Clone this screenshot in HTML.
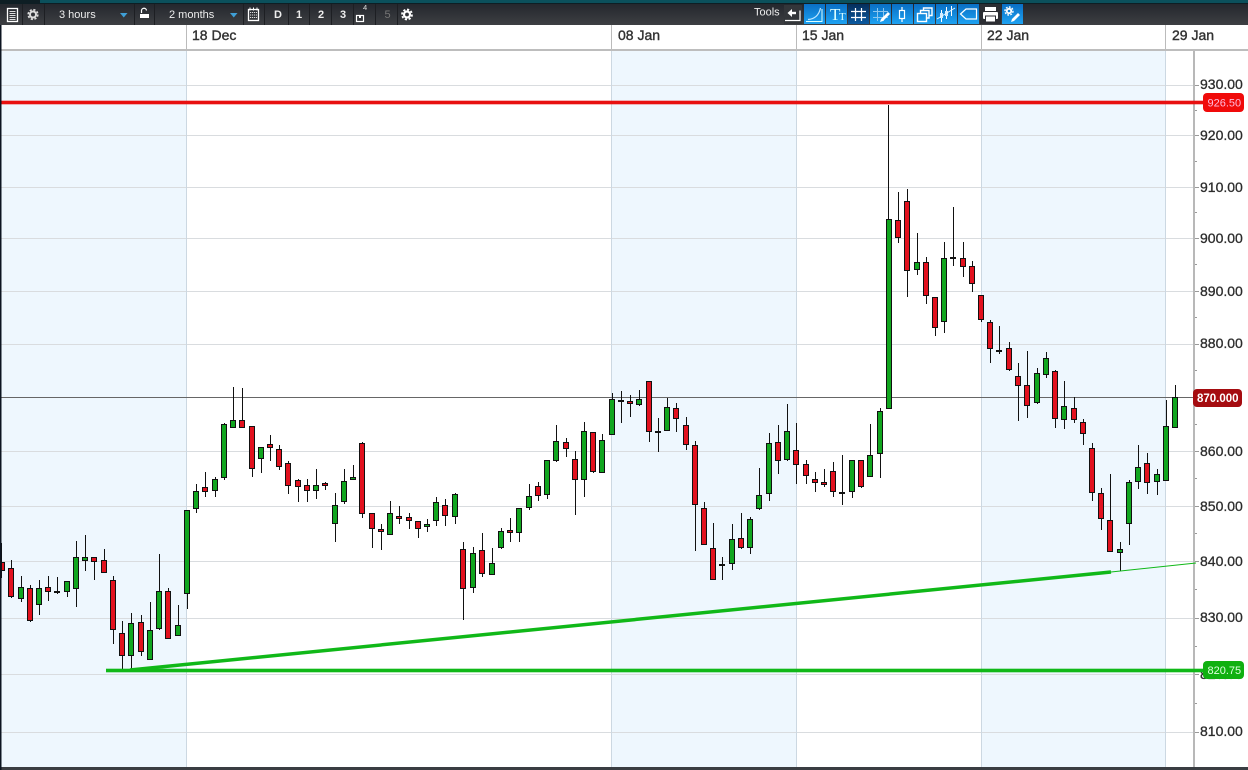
<!DOCTYPE html>
<html><head><meta charset="utf-8"><style>
html,body{margin:0;padding:0;background:#fff;width:1248px;height:770px;overflow:hidden}
svg{display:block;font-family:"Liberation Sans",sans-serif}
.d{font-size:14px;fill:#333;stroke:#333;stroke-width:.4}
.p{font-size:14px;fill:#2c2c2c;stroke:#2c2c2c;stroke-width:.3}
.t{font-size:11px;fill:#eee}
.n{font-size:11px;fill:#eee;font-weight:bold}
.i{fill:none;stroke:#fff;stroke-width:1.3}
</style></head><body>
<svg width="1248" height="770" viewBox="0 0 1248 770" xmlns="http://www.w3.org/2000/svg">
<defs>
<linearGradient id="tb" x1="0" y1="0" x2="0" y2="1"><stop offset="0" stop-color="#24272d"/><stop offset="1" stop-color="#3d3f42"/></linearGradient>
<linearGradient id="bl" x1="0" y1="0" x2="0" y2="1"><stop offset="0" stop-color="#0a6fc4"/><stop offset="1" stop-color="#1da2f2"/></linearGradient>
<linearGradient id="dk" x1="0" y1="0" x2="0" y2="1"><stop offset="0" stop-color="#062f5c"/><stop offset="1" stop-color="#0b5aa0"/></linearGradient>
</defs>
<rect width="1248" height="770" fill="#fff"/>
<!-- bands -->
<g fill="#eef7fe"><rect x="0" y="51" width="186" height="716"/><rect x="611" y="51" width="185" height="716"/><rect x="981" y="51" width="184" height="716"/></g>
<!-- grid -->
<path d="M0 85.5H1194M0 135.5H1194M0 187.5H1194M0 238.5H1194M0 291.5H1194M0 344.5H1194M0 451.5H1194M0 506.5H1194M0 561.5H1194M0 618.5H1194M0 674.5H1194M0 732.5H1194" stroke="#d9dcdf" stroke-width="1"/>
<path d="M186.5 51V767M611.5 51V767M796.5 51V767M981.5 51V767M1165.5 51V767" stroke="#ccd8e2" stroke-width="1"/>
<!-- date header -->
<path d="M186.5 25V49M611.5 25V49M796.5 25V49M981.5 25V49M1165.5 25V49" stroke="#bbb" stroke-width="1"/>
<rect x="0" y="49" width="1248" height="2" fill="#bdbdbd"/>
<text class="d" x="192" y="40">18 Dec</text>
<text class="d" x="618" y="40">08 Jan</text>
<text class="d" x="802" y="40">15 Jan</text>
<text class="d" x="987" y="40">22 Jan</text>
<text class="d" x="1172" y="40">29 Jan</text>
<!-- last price line -->
<rect x="0" y="397" width="1194" height="1" fill="#666"/>
<!-- axis -->
<rect x="1193" y="51" width="2" height="716" fill="#b8b8b8"/>
<path d="M1195 85.5h4M1195 135.5h4M1195 187.5h4M1195 238.5h4M1195 291.5h4M1195 344.5h4M1195 451.5h4M1195 506.5h4M1195 561.5h4M1195 618.5h4M1195 674.5h4M1195 732.5h4M1195 110.5h2M1195 161.5h2M1195 212.5h2M1195 264.5h2M1195 317.5h2M1195 370.5h2M1195 424.5h2M1195 478.5h2M1195 533.5h2M1195 589.5h2M1195 646.5h2M1195 703.5h2" stroke="#999" stroke-width="1"/>
<text class="p" x="1200" y="89">930.00</text>
<text class="p" x="1200" y="140">920.00</text>
<text class="p" x="1200" y="192">910.00</text>
<text class="p" x="1200" y="243">900.00</text>
<text class="p" x="1200" y="296">890.00</text>
<text class="p" x="1200" y="348">880.00</text>
<text class="p" x="1200" y="456">860.00</text>
<text class="p" x="1200" y="511">850.00</text>
<text class="p" x="1200" y="566">840.00</text>
<text class="p" x="1200" y="622">830.00</text>
<text class="p" x="1200" y="679">820.00</text>
<text class="p" x="1200" y="736">810.00</text>
<!-- wicks -->
<path stroke="#111" stroke-width="1" fill="none" d="M1.5 543V578M11.5 560V598M21.5 576V602M30.5 585V622M39.5 580V615M48.5 576V601M57.5 577V594M67.5 581V597M76.5 541V607M85.5 535V571M94.5 557V580M104.5 549V573M113.5 576V644M122.5 621V669M131.5 613V669M141.5 615V656M150.5 602V660M159.5 554V630M168.5 588V639M178.5 605V636M187.5 510V609M196.5 484V513M205.5 472V497M215.5 477V497M224.5 423V480M233.5 387V428M242.5 388V428M252.5 426V477M261.5 447V473M270.5 435V461M279.5 445V470M288.5 461V494M298.5 479V502M307.5 479V502M316.5 469V499M325.5 482V490M335.5 493V542M344.5 469V504M353.5 465V480M362.5 442V518M372.5 513V548M381.5 524V550M390.5 501V535M399.5 506V524M409.5 513V529M418.5 521V538M427.5 519V532M436.5 497V526M445.5 499V526M455.5 493V524M463.5 542V620M473.5 547V593M482.5 533V577M492.5 548V575M501.5 528V549M510.5 518V542M519.5 508V542M529.5 484V510M538.5 482V501M547.5 460V499M556.5 425V462M566.5 438V457M575.5 451V515M584.5 422V497M593.5 432V473M602.5 434V473M612.5 393V435M621.5 391V423M630.5 395V417M639.5 390V406M649.5 381V442M658.5 418V452M667.5 398V431M676.5 403V432M686.5 417V450M695.5 441V551M704.5 502V545M713.5 523V580M722.5 557V580M732.5 524V570M741.5 513V549M750.5 517V554M759.5 468V510M769.5 433V501M778.5 425V474M787.5 404V461M796.5 423V484M806.5 460V484M815.5 472V492M824.5 469V487M833.5 462V497M842.5 455V505M852.5 460V498M861.5 460V488M870.5 424V477M880.5 408V478M888.5 105V409M898.5 192V243M907.5 189V297M917.5 233V275M926.5 257V304M935.5 297V336M944.5 242V333M953.5 207V266M963.5 242V277M972.5 261V292M981.5 295V322M990.5 320V363M999.5 326V354M1009.5 342V371M1018.5 363V421M1027.5 351V418M1037.5 368V404M1046.5 352V378M1055.5 370V428M1064.5 381V429M1074.5 397V423M1083.5 419V445M1092.5 443V501M1101.5 488V530M1110.5 474V552M1120.5 542V571M1129.5 480V545M1138.5 445V489M1147.5 453V494M1157.5 469V495M1166.5 400V481M1175.5 385V428"/>
<!-- red bodies -->
<path fill="#e2111e" stroke="#111" stroke-width="1" d="M1.5 562.5h3V570.5h-3zM8.5 568.5h5V596.5h-5zM27.5 588.5h5V620.5h-5zM45.5 587.5h5V591.5h-5zM91.5 557.5h5V561.5h-5zM101.5 560.5h5V572.5h-5zM110.5 580.5h5V629.5h-5zM119.5 633.5h5V655.5h-5zM138.5 622.5h5V651.5h-5zM165.5 591.5h5V638.5h-5zM202.5 487.5h5V491.5h-5zM239.5 420.5h5V427.5h-5zM249.5 426.5h5V468.5h-5zM267.5 444.5h5V447.5h-5zM276.5 449.5h5V466.5h-5zM285.5 463.5h5V485.5h-5zM295.5 480.5h5V486.5h-5zM304.5 485.5h5V490.5h-5zM322.5 483.5h5V485.5h-5zM359.5 443.5h5V513.5h-5zM369.5 513.5h5V528.5h-5zM378.5 529.5h5V531.5h-5zM396.5 516.5h5V518.5h-5zM406.5 517.5h5V520.5h-5zM415.5 521.5h5V528.5h-5zM442.5 505.5h5V515.5h-5zM460.5 549.5h5V588.5h-5zM479.5 550.5h5V573.5h-5zM507.5 530.5h5V532.5h-5zM535.5 486.5h5V495.5h-5zM563.5 442.5h5V448.5h-5zM572.5 459.5h5V479.5h-5zM590.5 432.5h5V471.5h-5zM618.5 400.5h5V401.5h-5zM627.5 401.5h5V403.5h-5zM646.5 381.5h5V431.5h-5zM673.5 408.5h5V418.5h-5zM683.5 425.5h5V444.5h-5zM692.5 445.5h5V504.5h-5zM701.5 508.5h5V544.5h-5zM710.5 548.5h5V579.5h-5zM738.5 538.5h5V547.5h-5zM775.5 442.5h5V460.5h-5zM793.5 450.5h5V464.5h-5zM803.5 464.5h5V475.5h-5zM812.5 479.5h5V482.5h-5zM821.5 482.5h5V484.5h-5zM830.5 471.5h5V491.5h-5zM858.5 460.5h5V486.5h-5zM895.5 220.5h5V237.5h-5zM904.5 201.5h5V270.5h-5zM923.5 262.5h5V295.5h-5zM932.5 297.5h5V327.5h-5zM950.5 257.5h5V258.5h-5zM960.5 258.5h5V266.5h-5zM969.5 266.5h5V283.5h-5zM978.5 295.5h5V319.5h-5zM987.5 322.5h5V348.5h-5zM1006.5 348.5h5V369.5h-5zM1015.5 376.5h5V385.5h-5zM1024.5 385.5h5V405.5h-5zM1052.5 371.5h5V418.5h-5zM1071.5 408.5h5V419.5h-5zM1080.5 422.5h5V433.5h-5zM1089.5 448.5h5V492.5h-5zM1098.5 493.5h5V518.5h-5zM1107.5 520.5h5V551.5h-5zM1144.5 463.5h5V482.5h-5z"/>
<!-- green bodies -->
<path fill="#11a61f" stroke="#111" stroke-width="1" d="M18.5 587.5h5V598.5h-5zM36.5 588.5h5V604.5h-5zM54.5 591.5h5V592.5h-5zM64.5 581.5h5V591.5h-5zM73.5 557.5h5V588.5h-5zM82.5 557.5h5V560.5h-5zM128.5 623.5h5V655.5h-5zM147.5 630.5h5V659.5h-5zM156.5 591.5h5V628.5h-5zM175.5 625.5h5V635.5h-5zM184.5 510.5h5V593.5h-5zM193.5 491.5h5V508.5h-5zM212.5 479.5h5V490.5h-5zM221.5 424.5h5V477.5h-5zM230.5 420.5h5V427.5h-5zM258.5 447.5h5V458.5h-5zM313.5 485.5h5V490.5h-5zM332.5 505.5h5V523.5h-5zM341.5 481.5h5V501.5h-5zM350.5 477.5h5V479.5h-5zM387.5 513.5h5V534.5h-5zM424.5 524.5h5V526.5h-5zM433.5 502.5h5V520.5h-5zM452.5 494.5h5V516.5h-5zM470.5 553.5h5V587.5h-5zM489.5 563.5h5V574.5h-5zM498.5 531.5h5V547.5h-5zM516.5 508.5h5V532.5h-5zM526.5 496.5h5V507.5h-5zM544.5 460.5h5V494.5h-5zM553.5 441.5h5V460.5h-5zM581.5 431.5h5V479.5h-5zM599.5 440.5h5V472.5h-5zM609.5 399.5h5V434.5h-5zM636.5 399.5h5V404.5h-5zM655.5 431.5h5V432.5h-5zM664.5 407.5h5V430.5h-5zM719.5 564.5h5V565.5h-5zM729.5 539.5h5V563.5h-5zM747.5 519.5h5V547.5h-5zM756.5 495.5h5V508.5h-5zM766.5 443.5h5V493.5h-5zM784.5 431.5h5V459.5h-5zM839.5 492.5h5V493.5h-5zM849.5 460.5h5V491.5h-5zM867.5 455.5h5V476.5h-5zM877.5 411.5h5V453.5h-5zM886.5 219.5h5V408.5h-5zM914.5 262.5h5V269.5h-5zM941.5 258.5h5V321.5h-5zM996.5 350.5h5V351.5h-5zM1034.5 373.5h5V402.5h-5zM1043.5 358.5h5V374.5h-5zM1061.5 406.5h5V419.5h-5zM1117.5 549.5h5V552.5h-5zM1126.5 482.5h5V523.5h-5zM1135.5 467.5h5V481.5h-5zM1154.5 474.5h5V481.5h-5zM1163.5 426.5h5V480.5h-5zM1172.5 397.5h5V427.5h-5z"/>
<!-- trend lines -->
<rect x="0" y="100.700" width="1205" height="3.600" fill="#e81010"/>
<rect x="106" y="668.700" width="1099" height="3.600" fill="#10b818"/>
<path d="M130 670L1111 572" stroke="#10b818" stroke-width="3.500" fill="none"/>
<path d="M1111 572L1196 563" stroke="#10b818" stroke-width="1" fill="none"/>
<!-- price tags -->
<rect x="1203" y="93" width="41" height="19" rx="4" fill="#f00a0a"/>
<text x="1207.500" y="106.500" font-size="11" fill="#fbd">926.50</text>
<rect x="1203" y="661" width="41" height="18" rx="4" fill="#10b010"/>
<text x="1207.500" y="674" font-size="11" fill="#dfd">820.75</text>
<rect x="1193" y="389" width="49" height="18" rx="4" fill="#a50c10"/>
<text x="1197" y="402" font-size="11.500" font-weight="bold" fill="#fff">870.000</text>
<!-- bottom & left -->
<rect x="0" y="767" width="1248" height="3" fill="#3a3d42"/>
<rect x="0" y="25" width="1.500" height="745" fill="#0c1420"/>
<!-- toolbar -->
<rect x="0" y="0" width="1248" height="4" fill="#0e1e24"/>
<rect x="40" y="0" width="1208" height="3" fill="#0b505c"/>
<rect x="0" y="4" width="1248" height="21" fill="url(#tb)"/>
<path d="M22.500 4V25M44.500 4V25M134.500 4V25M154.500 4V25M243.500 4V25M264.500 4V25M288.500 4V25M309.500 4V25M331.500 4V25M353.500 4V25M375.500 4V25M397.500 4V25" stroke="#1d1f23" stroke-width="1"/>
<!-- list icon -->
<rect x="7.500" y="8.500" width="10" height="13" class="i"/>
<path d="M9.500 11.500h6M9.500 13.500h6M9.500 15.500h6M9.500 17.500h6M9.500 19.500h6" stroke="#ddd" stroke-width="1"/>
<!-- gears -->
<circle cx="33" cy="14.500" r="3" fill="none" stroke="#ddd" stroke-width="2"/>
<circle cx="33" cy="14.500" r="4.800" fill="none" stroke="#ddd" stroke-width="1.600" stroke-dasharray="2.200 1.600"/>
<circle cx="407" cy="14.500" r="3" fill="none" stroke="#fff" stroke-width="2.200"/>
<circle cx="407" cy="14.500" r="5" fill="none" stroke="#fff" stroke-width="1.800" stroke-dasharray="2.200 1.700"/>
<text class="t" x="59" y="18">3 hours</text>
<path d="M120 13h7.500l-3.750 4.500z" fill="#3f9fd6"/>
<path d="M141.500 13v-2a2.500 2.500 0 0 1 5 -.5" fill="none" stroke="#fff" stroke-width="1.200"/>
<rect x="140" y="14" width="9" height="4" fill="#fff"/>
<text class="t" x="169" y="18">2 months</text>
<path d="M230 13h7.500l-3.750 4.500z" fill="#3f9fd6"/>
<!-- calendar -->
<rect x="248.500" y="9.500" width="10" height="11" class="i" stroke-width="1"/>
<path d="M250 7.500v3M253.500 7.500v3M257 7.500v3" stroke="#fff" stroke-width="1"/>
<path d="M250 12.500h7M250 15h7M250 17.500h7" stroke="#ddd" stroke-width="1" stroke-dasharray="1.200 .8"/>
<text class="n" x="274" y="18">D</text>
<text class="n" x="296" y="18">1</text>
<text class="n" x="318" y="18">2</text>
<text class="n" x="340" y="18">3</text>
<rect x="356.500" y="15.500" width="7" height="6" fill="none" stroke="#fff" stroke-width="1.200"/>
<rect x="359" y="15" width="2" height="3" fill="#fff"/>
<text x="363" y="10" font-size="7.500" fill="#ddd">4</text>
<text x="384.500" y="18" font-size="11" fill="#777">5</text>
<!-- tools -->
<text x="754" y="15.500" font-size="11" fill="#eee">Tools</text>
<rect x="784" y="5" width="18" height="19" fill="#33363a"/>
<path d="M785 20.500H800V10.500" fill="none" stroke="#fff" stroke-width="1.200"/>
<path d="M796 13H790" stroke="#fff" stroke-width="2.400"/>
<path d="M792 9l-4.500 4 4.500 4z" fill="#fff"/>
<g fill="url(#bl)">
<rect x="804" y="4" width="21" height="20"/><rect x="826" y="4" width="21" height="20"/>
<rect x="870" y="4" width="21" height="20"/><rect x="892" y="4" width="21" height="20"/>
<rect x="914" y="4" width="21" height="20"/><rect x="936" y="4" width="21" height="20"/>
<rect x="958" y="4" width="21" height="20"/><rect x="1002" y="4" width="21" height="20"/>
</g>
<rect x="848" y="4" width="21" height="20" fill="url(#dk)"/>
<rect x="980" y="4" width="21" height="20" fill="#2c2e33"/>
<path d="M806 21.500H822V9" fill="none" stroke="#dff" stroke-width="1"/>
<path d="M808 19.500C815 19 819 15 820.500 8" fill="none" stroke="#bfe6ff" stroke-width="1.200"/>
<text x="830" y="20" font-family="Liberation Serif,serif" font-size="17" fill="#dff">T</text>
<text x="839" y="20" font-family="Liberation Serif,serif" font-size="11" fill="#dff">T</text>
<path d="M855.500 8v13M861.500 8v13M851 11.500h15M851 17.500h15" stroke="#fff" stroke-width="1.200"/>
<path d="M877.500 8v13M883.500 8v13M873 11.500h15M873 17.500h15" stroke="#8cc6ee" stroke-width="1"/>
<path d="M880 22l1-3 7-7 2 2-7 7z" fill="#fff"/>
<rect x="899.500" y="10.500" width="5" height="8" fill="none" stroke="#fff" stroke-width="1.200"/>
<path d="M902 7v3.500M902 18.500v3.500" stroke="#fff" stroke-width="1.200"/>
<rect x="917.500" y="13.500" width="9" height="8" fill="none" stroke="#fff" stroke-width="1.400"/>
<path d="M920.500 13V10.500h8.500V18h-2.500M923.500 10V8h8.500v7.500h-2.500" fill="none" stroke="#fff" stroke-width="1.400"/>
<path d="M941.500 10v12M946.500 7v12M951.500 6v10" stroke="#fff" stroke-width="1"/>
<rect x="940" y="13" width="3" height="5" fill="#cfeaff"/><rect x="945" y="11" width="3" height="5" fill="#cfeaff"/>
<path d="M937 19L955 8" stroke="#e6f6ff" stroke-width="1"/>
<path d="M960.500 14l5.500-5h10.500v10H966z" fill="none" stroke="#fff" stroke-width="1.200"/>
<!-- printer -->
<rect x="985" y="7" width="11" height="4" fill="#fff"/>
<rect x="983" y="12" width="15" height="7" rx="1" fill="#fff"/>
<rect x="985.500" y="16" width="10" height="6" fill="#fff" stroke="#2c2e33" stroke-width="1"/>
<!-- settings -->
<circle cx="1009" cy="11" r="2.200" fill="none" stroke="#fff" stroke-width="1.800"/>
<circle cx="1009" cy="11" r="4" fill="none" stroke="#fff" stroke-width="1.400" stroke-dasharray="1.800 1.300"/>
<path d="M1011 22l1-3 6-6 2 2-6 6z" fill="#fff"/>
</svg>
</body></html>
